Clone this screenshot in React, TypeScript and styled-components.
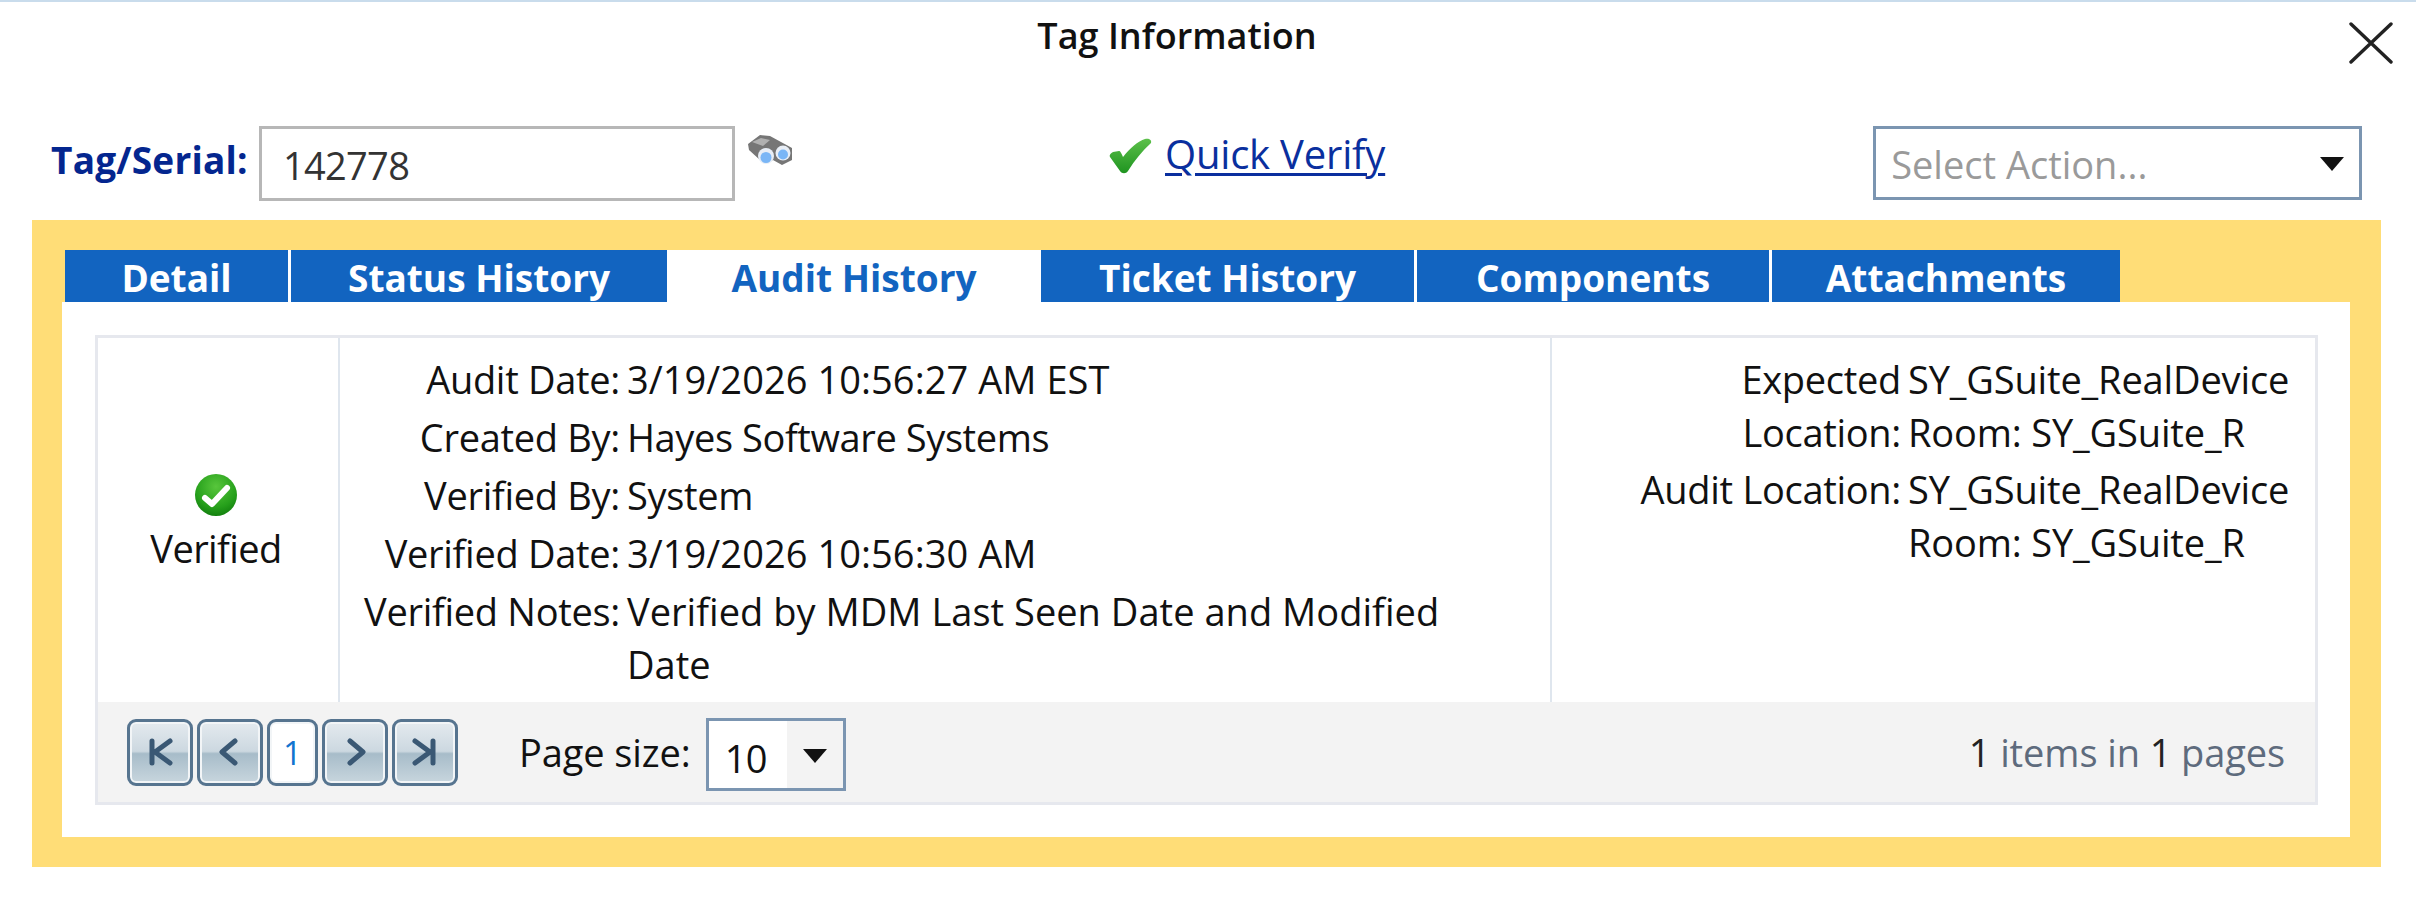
import styled, { createGlobalStyle } from "styled-components";

const GlobalStyle = createGlobalStyle`
  html, body {
    margin: 0;
    padding: 0;
    background: #fff;
  }
  body {
    font-family: "Open Sans", "Noto Sans", "Liberation Sans", sans-serif;
    color: #111;
  }
`;

const Page = styled.div`
  position: relative;
  width: 2416px;
  height: 910px;
  box-sizing: border-box;
  border-top: 2px solid #c9dcec;
  background: #fff;
  overflow: hidden;
`;

const TitleBar = styled.div`
  display: flex;
  justify-content: center;
  height: 124px;
  padding-right: 62px;
  box-sizing: border-box;
`;

const Title = styled.h1`
  margin: 12px 0 0;
  font-size: 36px;
  line-height: 44px;
  font-weight: 600;
  color: #111;
`;

const CloseButton = styled.button`
  position: absolute;
  top: 18px;
  left: 2349px;
  width: 44px;
  height: 44px;
  padding: 0;
  border: 0;
  background: none;
`;

const Toolbar = styled.div`
  display: flex;
  align-items: flex-start;
  height: 94px;
  padding-left: 51px;
`;

const TagLabel = styled.label`
  width: 208px;
  margin-top: 9px;
  font-size: 37px;
  line-height: 50px;
  font-weight: 700;
  letter-spacing: 0.2px;
  color: #04268f;
`;

const TagInput = styled.div`
  width: 476px;
  height: 75px;
  box-sizing: border-box;
  padding-left: 21px;
  border: 3px solid #b7b7b7;
  font-size: 38px;
  line-height: 73px;
  letter-spacing: -0.7px;
  color: #333;
`;

const FindIcon = styled.svg`
  width: 50px;
  height: 36px;
  margin: 6px 0 0 11px;
`;

const VerifyGroup = styled.div`
  display: flex;
  align-items: center;
  gap: 13px;
  margin: 6px 0 0 312px;
`;

const VerifyLink = styled.a`
  margin-top: -3px;
  font-size: 40px;
  line-height: 50px;
  letter-spacing: -0.2px;
  color: #0a2f9e;
  text-decoration: underline;
  text-decoration-thickness: 3px;
  text-underline-offset: 4px;
`;

const ActionSelect = styled.div`
  display: flex;
  align-items: center;
  justify-content: space-between;
  width: 489px;
  height: 74px;
  box-sizing: border-box;
  margin-left: 488px;
  padding: 2px 15px 0 15px;
  border: 3px solid #7b95b1;
  font-size: 38px;
  color: #9a9a9a;
`;

const Arrow = styled.i`
  display: block;
  width: 0;
  height: 0;
  border-left: 12px solid transparent;
  border-right: 12px solid transparent;
  border-top: 14px solid #111;
`;

const Frame = styled.div`
  width: 2349px;
  height: 647px;
  box-sizing: border-box;
  margin-left: 32px;
  padding: 30px 31px 30px 30px;
  background: #ffdd77;
`;

const TabStrip = styled.div`
  display: flex;
  height: 52px;
  padding-left: 3px;
`;

const Tab = styled.div<{ $width: number; $active?: boolean; $divider?: boolean }>`
  width: ${(p) => p.$width}px;
  box-sizing: border-box;
  border-right: ${(p) => (p.$divider ? "3px solid #fff" : "0")};
  text-align: center;
  font-size: 37px;
  line-height: 56px;
  font-weight: 700;
  color: ${(p) => (p.$active ? "#1264c0" : "#fff")};
  background: ${(p) => (p.$active ? "#fff" : "#1264c0")};
`;

const Panel = styled.div`
  height: 535px;
  box-sizing: border-box;
  padding: 33px 32px 32px 33px;
  background: #fff;
`;

const Grid = styled.div`
  display: flex;
  flex-direction: column;
  height: 470px;
  box-sizing: border-box;
  border: 3px solid #e6e8ee;
`;

const GridRow = styled.div`
  display: grid;
  grid-template-columns: 240px 1212px 1fr;
  flex: 1;
`;

const StatusCell = styled.div`
  display: flex;
  flex-direction: column;
  align-items: center;
  gap: 6px;
  padding: 135px 4px 0 0;
  font-size: 38px;
  line-height: 50px;
  letter-spacing: -0.6px;
`;

const InfoCell = styled.div<{ $padTop: number }>`
  padding-top: ${(p) => p.$padTop}px;
  border-left: 2px solid #dfe6ee;
`;

const InfoList = styled.div<{ $label: number; $lead: number; $value: number; $gap: number }>`
  display: grid;
  grid-template-columns: ${(p) => p.$label}px ${(p) => p.$value}px;
  column-gap: 7px;
  row-gap: ${(p) => p.$gap}px;
  margin-left: ${(p) => p.$lead}px;
  font-size: 38px;
  line-height: 53px;
  letter-spacing: -0.3px;
`;

const InfoLabel = styled.div`
  text-align: right;
`;

const InfoValue = styled.div<{ $spacing?: number }>`
  letter-spacing: ${(p) => p.$spacing ?? -0.3}px;
`;

const Footer = styled.div`
  display: flex;
  align-items: center;
  height: 100px;
  box-sizing: border-box;
  padding: 0 30px 0 29px;
  background: #f3f3f3;
`;

const Pager = styled.div`
  display: flex;
  gap: 4px;
`;

const PageButton = styled.button<{ $current?: boolean }>`
  display: flex;
  align-items: center;
  justify-content: center;
  width: ${(p) => (p.$current ? 51 : 66)}px;
  height: 67px;
  padding: 0;
  box-sizing: border-box;
  border: 3px solid #56748f;
  border-radius: 9px;
  box-shadow: inset 0 0 0 2px #f2f5f7;
  font-family: inherit;
  font-size: 33px;
  color: #1274cf;
  background: ${(p) =>
    p.$current
      ? "#fff"
      : "linear-gradient(#e4eaef 0%, #ccd8e0 48%, #a7bcc9 52%, #c8d6de 100%)"};
`;

const PageSizeLabel = styled.span`
  margin-left: 61px;
  font-size: 38px;
  letter-spacing: -0.1px;
`;

const SizeSelect = styled.div`
  display: flex;
  width: 140px;
  height: 73px;
  box-sizing: border-box;
  margin: 4px 0 0 15px;
  border: 3px solid #7b95b1;
  background: #fff;
`;

const SizeValue = styled.span`
  flex: 1;
  padding: 4px 0 0 16px;
  font-size: 38px;
  line-height: 66px;
  letter-spacing: -0.6px;
`;

const SizeToggle = styled.span`
  display: flex;
  align-items: center;
  justify-content: center;
  width: 56px;
  padding-top: 4px;
  background: #f3f3f3;
`;

const PagerInfo = styled.div`
  margin-left: auto;
  font-size: 38px;
  letter-spacing: -0.1px;
  color: #5e6b7d;
`;

const Strong = styled.span`
  color: #222;
`;

const pagerPaths: Record<string, string> = {
  first: "M9 6V28M27 6L12 17L27 28",
  prev: "M22 6L9 17L22 28",
  next: "M12 6L25 17L12 28",
  last: "M25 6V28M7 6L22 17L7 28",
};

const PagerIcon = ({ kind }: { kind: string }) => (
  <svg width="34" height="34" viewBox="0 0 34 34" fill="none">
    <path d={pagerPaths[kind]} stroke="#3a5874" strokeWidth="5" strokeLinecap="round" strokeLinejoin="round" />
  </svg>
);

const Binoculars = () => (
  <FindIcon viewBox="0 0 50 36">
    <path d="M2 12L14 3L24 4L46 16L46 28L36 33L27 28L23 30L14 28L3 18Z" fill="#767676" />
    <path d="M6 10L15 6L24 8L17 14Z" fill="#b0b0b0" />
    <circle cx="20" cy="24" r="8" fill="#e8eef6" />
    <circle cx="20" cy="25.5" r="5.5" fill="#7ab6f6" />
    <circle cx="37" cy="21" r="7.5" fill="#e8eef6" />
    <circle cx="37" cy="22.5" r="5" fill="#7ab6f6" />
  </FindIcon>
);

const QuickCheck = () => (
  <svg width="44" height="36" viewBox="0 0 44 36">
    <defs>
      <linearGradient id="quickCheck" x1="0" y1="0" x2="0" y2="1">
        <stop offset="0" stopColor="#5cc04a" />
        <stop offset="1" stopColor="#1f9420" />
      </linearGradient>
    </defs>
    <path
      d="M2 19C1 17 3 15 5 14L11 13C12 13 13 14 15 19C22 10 30 3 37 1C41 0 44 2 43 5C34 13 27 22 20 33C18 36 14 36 12 33Z"
      fill="url(#quickCheck)"
    />
  </svg>
);

const VerifiedBadge = () => (
  <svg width="44" height="44" viewBox="0 0 44 44">
    <defs>
      <radialGradient id="verifiedDisc" cx="0.5" cy="0.3" r="0.75">
        <stop offset="0" stopColor="#58c63c" />
        <stop offset="0.65" stopColor="#26a01b" />
        <stop offset="1" stopColor="#0f7a0c" />
      </radialGradient>
    </defs>
    <circle cx="22" cy="22" r="21" fill="url(#verifiedDisc)" />
    <path d="M11 25L18 31L33 15" fill="none" stroke="#fff" strokeWidth="6" strokeLinecap="round" strokeLinejoin="round" />
  </svg>
);

export default function App() {
  const tabs = [
    { name: "Detail", width: 226, divider: true },
    { name: "Status History", width: 376 },
    { name: "Audit History", width: 374, active: true },
    { name: "Ticket History", width: 376, divider: true },
    { name: "Components", width: 355, divider: true },
    { name: "Attachments", width: 348 },
  ];

  return (
    <Page>
      <GlobalStyle />
      <TitleBar>
        <Title>Tag Information</Title>
      </TitleBar>
      <CloseButton aria-label="Close">
        <svg width="44" height="44" viewBox="0 0 44 44">
          <path d="M2 4L42 42M42 4L2 42" stroke="#222" strokeWidth="3.4" strokeLinecap="round" />
        </svg>
      </CloseButton>

      <Toolbar>
        <TagLabel>Tag/Serial:</TagLabel>
        <TagInput>142778</TagInput>
        <Binoculars />
        <VerifyGroup>
          <QuickCheck />
          <VerifyLink href="#">Quick Verify</VerifyLink>
        </VerifyGroup>
        <ActionSelect>
          Select Action...
          <Arrow />
        </ActionSelect>
      </Toolbar>

      <Frame>
        <TabStrip>
          {tabs.map((tab) => (
            <Tab key={tab.name} $width={tab.width} $active={tab.active} $divider={tab.divider}>
              {tab.name}
            </Tab>
          ))}
        </TabStrip>
        <Panel>
          <Grid>
            <GridRow>
              <StatusCell>
                <VerifiedBadge />
                Verified
              </StatusCell>
              <InfoCell $padTop={15}>
                <InfoList $label={280} $lead={0} $value={830} $gap={5}>
                  <InfoLabel>Audit Date:</InfoLabel>
                  <InfoValue $spacing={0.06}>3/19/2026 10:56:27 AM EST</InfoValue>
                  <InfoLabel>Created By:</InfoLabel>
                  <InfoValue $spacing={-0.4}>Hayes Software Systems</InfoValue>
                  <InfoLabel>Verified By:</InfoLabel>
                  <InfoValue>System</InfoValue>
                  <InfoLabel>Verified Date:</InfoLabel>
                  <InfoValue $spacing={0.06}>3/19/2026 10:56:30 AM</InfoValue>
                  <InfoLabel>Verified Notes:</InfoLabel>
                  <InfoValue $spacing={0.03}>Verified by MDM Last Seen Date and Modified Date</InfoValue>
                </InfoList>
              </InfoCell>
              <InfoCell $padTop={15}>
                <InfoList $label={274} $lead={75} $value={400} $gap={4}>
                  <InfoLabel>Expected Location:</InfoLabel>
                  <InfoValue $spacing={-0.15}>
                    SY_GSuite_RealDevice
                    <br />
                    Room: SY_GSuite_R
                  </InfoValue>
                  <InfoLabel>Audit Location:</InfoLabel>
                  <InfoValue $spacing={-0.15}>
                    SY_GSuite_RealDevice
                    <br />
                    Room: SY_GSuite_R
                  </InfoValue>
                </InfoList>
              </InfoCell>
            </GridRow>
            <Footer>
              <Pager>
                <PageButton><PagerIcon kind="first" /></PageButton>
                <PageButton><PagerIcon kind="prev" /></PageButton>
                <PageButton $current>1</PageButton>
                <PageButton><PagerIcon kind="next" /></PageButton>
                <PageButton><PagerIcon kind="last" /></PageButton>
              </Pager>
              <PageSizeLabel>Page size:</PageSizeLabel>
              <SizeSelect>
                <SizeValue>10</SizeValue>
                <SizeToggle><Arrow /></SizeToggle>
              </SizeSelect>
              <PagerInfo>
                <Strong>1</Strong> items in <Strong>1</Strong> pages
              </PagerInfo>
            </Footer>
          </Grid>
        </Panel>
      </Frame>
    </Page>
  );
}
